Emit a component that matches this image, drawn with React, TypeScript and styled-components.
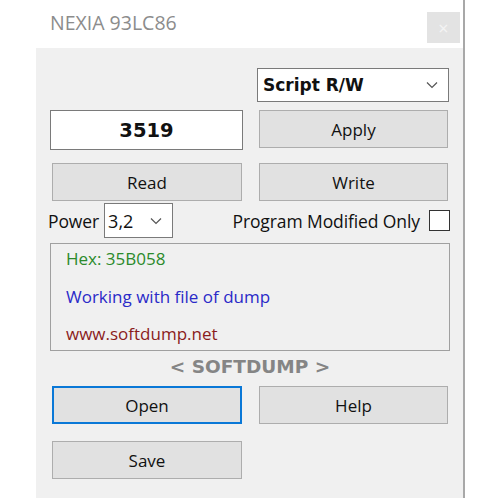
import styled, { createGlobalStyle } from "styled-components";

const GlobalStyle = createGlobalStyle`
  html, body {
    margin: 0;
    padding: 0;
    background: #ffffff;
  }
  body {
    font-family: "Open Sans", "Noto Sans", sans-serif;
  }
`;

const Chevron = () => (
  <svg width="12" height="8" viewBox="0 0 12 8">
    <path d="M1 1.5 L6 6.5 L11 1.5" fill="none" stroke="#555" strokeWidth="1.2" />
  </svg>
);

const App = () => {
  return (
    <>
      <GlobalStyle />
      <Page>
        <Window>
          <TitleBar>
            <Title>NEXIA 93LC86</Title>
            <CloseButton>×</CloseButton>
          </TitleBar>
          <Body>
            <Row $mb={8}>
              <Cell />
              <Cell>
                <Combo $bold>
                  <span>Script R/W</span>
                  <Chevron />
                </Combo>
              </Cell>
            </Row>
            <Row $mb={13}>
              <Cell>
                <NumberBox>3519</NumberBox>
              </Cell>
              <Cell>
                <Button>Apply</Button>
              </Cell>
            </Row>
            <Row $mb={2}>
              <Cell>
                <Button>Read</Button>
              </Cell>
              <Cell>
                <Button>Write</Button>
              </Cell>
            </Row>
            <OptionsRow>
              <PowerGroup>
                <Label>Power</Label>
                <SmallCombo>
                  <span>3,2</span>
                  <Chevron />
                </SmallCombo>
              </PowerGroup>
              <CheckGroup>
                <Label>Program Modified Only</Label>
                <CheckBox />
              </CheckGroup>
            </OptionsRow>
            <InfoBox>
              <InfoLine $color="#2b8a2b">Hex: 35B058</InfoLine>
              <InfoLine $color="#2a2ac8">Working with file of dump</InfoLine>
              <InfoLine $color="#8b1c1c">www.softdump.net</InfoLine>
            </InfoBox>
            <Brand>&lt; SOFTDUMP &gt;</Brand>
            <Row $mb={17}>
              <Cell>
                <Button $focused>Open</Button>
              </Cell>
              <Cell>
                <Button>Help</Button>
              </Cell>
            </Row>
            <Row $mb={0}>
              <Cell>
                <Button>Save</Button>
              </Cell>
              <Cell />
            </Row>
          </Body>
        </Window>
      </Page>
    </>
  );
};

export default App;

const Page = styled.div`
  width: 500px;
  height: 500px;
  padding-left: 36px;
  box-sizing: border-box;
  overflow: hidden;
`;

const Window = styled.div`
  width: 427px;
  height: 498px;
  border-right: 2px solid #a8a8a8;
  display: flex;
  flex-direction: column;
`;

const TitleBar = styled.div`
  height: 48px;
  background: #ffffff;
  display: flex;
  align-items: flex-start;
  justify-content: space-between;
  padding-left: 14px;
  padding-right: 3px;
`;

const Title = styled.div`
  font-family: "Open Sans", sans-serif;
  font-size: 19.5px;
  color: #8c8c8c;
  margin-top: 9px;
`;

const CloseButton = styled.div`
  width: 33px;
  height: 31px;
  margin-top: 12px;
  background: #e3e3e3;
  color: #f4f4f4;
  font-size: 18px;
  display: flex;
  align-items: center;
  justify-content: center;
`;

const Body = styled.div`
  flex: 1;
  background: #f0f0f0;
  padding: 20px 13px 0 14px;
  display: flex;
  flex-direction: column;
`;

const Row = styled.div<{ $mb: number }>`
  display: grid;
  grid-template-columns: 193px 192px;
  column-gap: 14px;
  margin-bottom: ${(p) => p.$mb}px;
`;

const Cell = styled.div`
  display: flex;
`;

const Button = styled.div<{ $focused?: boolean }>`
  flex: 1;
  height: 38px;
  margin: 0 1px 0 2px;
  box-sizing: border-box;
  background: #e1e1e1;
  border: ${(p) => (p.$focused ? "2px solid #0a78d7" : "1px solid #adadad")};
  display: flex;
  align-items: center;
  justify-content: center;
  font-family: "Open Sans", sans-serif;
  font-size: 17px;
  color: #111;
`;

const NumberBox = styled.div`
  flex: 1;
  height: 40px;
  box-sizing: border-box;
  background: #ffffff;
  border: 1px solid #7a7a7a;
  display: flex;
  align-items: center;
  justify-content: center;
  font-family: "DejaVu Sans", sans-serif;
  font-weight: bold;
  font-size: 19.5px;
  color: #111;
`;

const Combo = styled.div<{ $bold?: boolean }>`
  flex: 1;
  height: 34px;
  box-sizing: border-box;
  background: #ffffff;
  border: 1px solid #7a7a7a;
  display: flex;
  align-items: center;
  justify-content: space-between;
  padding: 0 10px 0 5px;
  font-family: "DejaVu Sans", sans-serif;
  font-weight: ${(p) => (p.$bold ? "bold" : "normal")};
  font-size: 17px;
  color: #111;
`;

const OptionsRow = styled.div`
  display: flex;
  align-items: center;
  justify-content: space-between;
  margin-bottom: 5px;
`;

const PowerGroup = styled.div`
  display: flex;
  align-items: center;
  gap: 5px;
  margin-left: -2px;
`;

const Label = styled.span`
  font-family: "Open Sans", sans-serif;
  font-size: 17.5px;
  letter-spacing: -0.1px;
  color: #111;
`;

const SmallCombo = styled.div`
  width: 69px;
  height: 35px;
  box-sizing: border-box;
  background: #ffffff;
  border: 1px solid #7a7a7a;
  display: flex;
  align-items: center;
  justify-content: space-between;
  padding: 0 10px 0 3px;
  font-family: "Open Sans", sans-serif;
  font-size: 18px;
  color: #111;
`;

const CheckGroup = styled.div`
  display: flex;
  align-items: center;
  gap: 9px;
`;

const CheckBox = styled.div`
  width: 21px;
  height: 21px;
  box-sizing: border-box;
  background: #ffffff;
  border: 1px solid #333333;
`;

const InfoBox = styled.div`
  height: 108px;
  box-sizing: border-box;
  border: 1px solid #a0a0a0;
  padding: 3px 12px 4px 15px;
  display: flex;
  flex-direction: column;
  justify-content: space-between;
`;

const InfoLine = styled.div<{ $color: string }>`
  font-family: "Open Sans", sans-serif;
  font-size: 17px;
  color: ${(p) => p.$color};
  line-height: 24px;
`;

const Brand = styled.div`
  text-align: center;
  font-family: "DejaVu Sans", sans-serif;
  font-weight: bold;
  font-size: 18.5px;
  color: #858585;
  height: 35px;
  line-height: 32px;
`;
